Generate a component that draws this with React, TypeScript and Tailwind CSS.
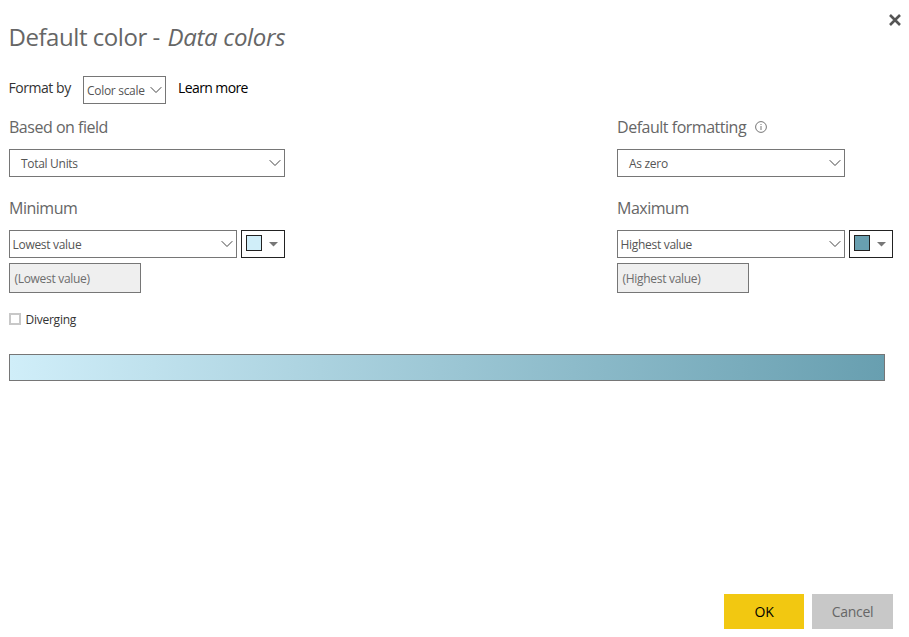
import type { ReactNode } from "react";

function Chevron() {
  return (
    <svg width="12" height="8" viewBox="0 0 12 8" className="shrink-0" fill="none" stroke="#444" strokeWidth="1">
      <path d="M0.7 1.2 L6 6.5 L11.3 1.2" />
    </svg>
  );
}

function Select({ children, className }: { children: ReactNode; className: string }) {
  return (
    <button className={`flex h-7 items-center justify-between border border-[#767676] bg-white pr-[3px] text-left text-[12px] tracking-[-0.3px] text-[#555] ${className}`}>
      <span className="pt-[2px]">{children}</span>
      <Chevron />
    </button>
  );
}

function ColorPicker({ swatch }: { swatch: string }) {
  return (
    <button className="flex h-7 w-11 items-start border border-[#222] bg-white pt-1 pl-1">
      <span className={`size-4 border border-[#222] ${swatch}`} />
      <svg width="9" height="5" viewBox="0 0 9 5" className="mt-[7px] ml-[7px]" fill="#777">
        <path d="M0 0H9L4.5 4.5Z" />
      </svg>
    </button>
  );
}

function ValueInput({ children }: { children: ReactNode }) {
  return (
    <div className="mt-[5px] flex h-[30px] w-[132px] items-center border border-[#767676] bg-[#efefef] pt-[2px] pl-[4.5px] text-[12px] tracking-[-0.3px] text-[#6d6d6d]">
      {children}
    </div>
  );
}

function InfoIcon() {
  return (
    <svg width="12" height="12" viewBox="0 0 12 12" className="mb-[2px]" fill="none" stroke="#666" strokeWidth="0.9">
      <circle cx="6" cy="6" r="5.4" />
      <path d="M6 5V9M6 3V4" />
    </svg>
  );
}

const label = "flex h-[21px] items-center pb-[2px] text-[16px] leading-[19px] tracking-[-0.48px] text-[#666]";

export default function App() {
  return (
    <main className="flex h-[637px] w-[909px] flex-col overflow-hidden bg-white pl-[9px] font-['Open_Sans','Noto_Sans',sans-serif] whitespace-nowrap">
      <header className="flex h-[76px] justify-between">
        <h1 className="mt-[17px] -ml-[0.5px] flex h-10 items-center text-[24px] leading-10 text-[#666]">
          <span className="w-[159px] tracking-[-0.45px]">Default color -</span>
          <em className="tracking-[-0.3px]">Data colors</em>
        </h1>
        <svg width="12" height="12" viewBox="0 0 12 12" className="mt-[14px] mr-2" stroke="#555" strokeWidth="2.6">
          <path d="M1 1L11 11M11 1L1 11" />
        </svg>
      </header>

      <div className="flex h-[42px] items-start text-[14px] leading-6">
        <span className="-ml-[0.5px] w-[74.5px] tracking-[-0.45px] text-[#333]">Format by</span>
        <Select className="w-[83px] pl-[3px]">Color scale</Select>
        <a className="ml-3 tracking-[-0.6px] text-black">Learn more</a>
      </div>

      <div className="flex">
        <section className="w-[608px]">
          <h2 className={label}>Based on field</h2>
          <Select className="mt-[10px] w-[276px] pl-[11px]">Total Units</Select>
          <h2 className={`mt-[22px] ${label}`}>Minimum</h2>
          <div className="mt-[10px] flex gap-1">
            <Select className="w-[228px] pl-[2.5px]">Lowest value</Select>
            <ColorPicker swatch="bg-[#d0eef9]" />
          </div>
          <ValueInput>(Lowest value)</ValueInput>
        </section>
        <section>
          <h2 className={label}>
            <span className="w-[138px]">Default formatting</span>
            <InfoIcon />
          </h2>
          <Select className="mt-[10px] w-[228px] pl-[11px]">As zero</Select>
          <h2 className={`mt-[22px] ${label}`}>Maximum</h2>
          <div className="mt-[10px] flex gap-1">
            <Select className="w-[228px] pl-[2.5px]">Highest value</Select>
            <ColorPicker swatch="bg-[#689fb0]" />
          </div>
          <ValueInput>(Highest value)</ValueInput>
        </section>
      </div>

      <label className="mt-[17px] flex h-[18px] items-center text-[12px] text-[#333]">
        <span className="size-3 border-2 border-[#c8c8c8] bg-white" />
        <span className="ml-[4.5px] pt-[2px] tracking-[-0.25px]">Diverging</span>
      </label>

      <div className="mt-[26px] h-[27px] w-[876px] border border-[#767676] bg-linear-to-r/srgb from-[#d0eef9] to-[#689fb0]" />

      <footer className="mt-[213px] mr-4 flex justify-end gap-2 text-[14px] tracking-[-0.3px]">
        <button className="h-[35px] w-20 bg-[#f2c811] text-black">OK</button>
        <button className="h-[35px] w-[81px] bg-[#c8c8c8] text-[#666]">Cancel</button>
      </footer>
    </main>
  );
}
